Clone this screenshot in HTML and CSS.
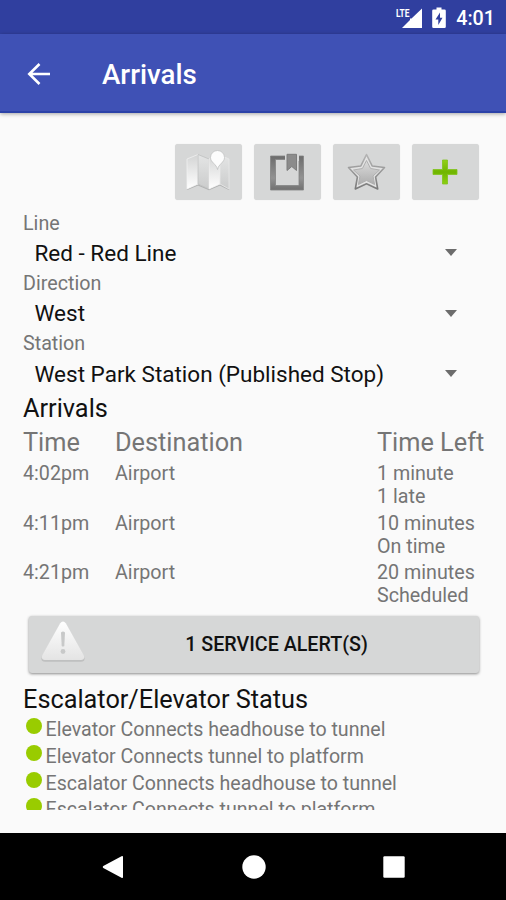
FILE: index.html
```html
<!DOCTYPE html>
<html lang="en">
<head>
<meta charset="utf-8">
<title>Arrivals</title>
<link rel="stylesheet" href="styles.css">
</head>
<body>
<div class="screen">
  <div class="status-bar">
    <svg class="signal" width="28" height="24" viewBox="0 0 28 24">
      <path d="M26 2.500V22H6L14 14V12.500H15.500Z" fill="#fff"/>
      <text class="lte" x="0" y="11" textLength="13.500" lengthAdjust="spacingAndGlyphs">LTE</text>
    </svg>
    <svg class="battery" width="14" height="22" viewBox="0 0 14 22">
      <path d="M4.500 0.500h5v2h3q1.300 0 1.300 1.300v16q0 1.300-1.300 1.300h-11q-1.300 0-1.300-1.300v-16q0-1.300 1.300-1.300h3z" fill="#fff"/>
      <path d="M8 5.500L3.500 12.500H6.300V18L10.500 10.800H8Z" fill="#303f9f"/>
    </svg>
    <span class="clock">4:01</span>
  </div>
  <header class="toolbar">
    <svg class="back" width="24" height="24" viewBox="0 0 24 24" fill="none" stroke="#fff" stroke-width="2.600">
      <path d="M24 12H3.500M13.500 2L3.300 12L13.500 22"/>
    </svg>
    <h1 class="title">Arrivals</h1>
  </header>
  <main class="content">
    <div class="actions">
      <button class="action" aria-label="Map">
        <svg width="46" height="44" viewBox="0 0 46 44">
          <defs>
            <linearGradient id="fold" x1="0" y1="0" x2="0" y2="1"><stop offset="0" stop-color="#d3d4d4"/><stop offset="1" stop-color="#fff"/></linearGradient>
            <linearGradient id="fold2" x1="0" y1="0" x2="0" y2="1"><stop offset="0" stop-color="#e4e5e5"/><stop offset="1" stop-color="#cbcccc"/></linearGradient>
          </defs>
          <path d="M2 39.500L13 35L24 39.500L35 35L44 39.500" fill="none" stroke="#b2b3b3" stroke-width="1.200"/>
          <path d="M2 9L13 4.500V34L2 39Z" fill="url(#fold)" stroke="#f4f4f4" stroke-width=".7"/>
          <path d="M13 4.500L24 9V39L13 34Z" fill="url(#fold2)" stroke="#bfc0c0" stroke-width=".8"/>
          <path d="M24 9L35 5V34L24 39Z" fill="url(#fold)" stroke="#f4f4f4" stroke-width=".7"/>
          <path d="M35 5L44 9V39L35 34Z" fill="url(#fold2)" stroke="#e8e8e8" stroke-width=".8"/>
          <path d="M32.500 19.500C31.500 14 25.500 12.500 25.500 7.500A7 7 0 0 1 39.500 7.500C39.500 12.500 33.500 14 32.500 19.500Z" fill="#fcfcfc" stroke="#c0c1c1" stroke-width=".8"/>
        </svg>
      </button>
      <button class="action" aria-label="Bookmarks">
        <svg width="36" height="38" viewBox="0 0 36 38">
          <defs><linearGradient id="frame" x1="0" y1="0" x2="0" y2="1"><stop offset="0" stop-color="#6c6c6c"/><stop offset=".65" stop-color="#929292"/><stop offset="1" stop-color="#707070"/></linearGradient></defs>
          <path d="M1.500 3H34.500V37H1.500ZM6.500 6.500V32.500H30V6.500Z" fill="url(#frame)" fill-rule="evenodd" stroke="#848484" stroke-width=".8"/>
          <path d="M16 2H30V8H16Z" fill="#d6d7d7"/>
          <path d="M18 1.300H27.500V17.500L22.800 13.500L18 17.500Z" fill="#8b8b8b" stroke="#7c7c7c"/>
        </svg>
      </button>
      <button class="action" aria-label="Favorite">
        <svg width="40" height="40" viewBox="0 0 40 40">
          <defs>
            <linearGradient id="star" x1="0" y1="0" x2="0" y2="1"><stop offset="0" stop-color="#dcdcdc"/><stop offset="1" stop-color="#adadad"/></linearGradient>
            <linearGradient id="edge" x1="0" y1="0" x2="0" y2="1"><stop offset="0" stop-color="#b4b4b4"/><stop offset="1" stop-color="#7a7a7a"/></linearGradient>
          </defs>
          <path d="M20.500 2.500L26.200 14L38.500 15.500L29.600 25L31.700 37L20.500 31.700L9.300 37L11.400 25L2.500 15.500L14.800 14Z" fill="#e2e2e2" stroke="url(#edge)" stroke-width="1.600" stroke-linejoin="round"/>
          <path d="M20.500 8.500L24.600 16.500L33.500 18L27 24L28.600 32.500L20.500 28.500L12.400 32.500L14 24L7.500 18L16.400 16.500Z" fill="url(#star)" stroke="#b0b0b0" stroke-width="1" stroke-linejoin="round"/>
        </svg>
      </button>
      <button class="action" aria-label="Add">
        <svg width="26" height="26" viewBox="0 0 26 26">
          <defs><linearGradient id="plus" x1="0" y1="0" x2="0" y2="1"><stop offset="0" stop-color="#93d016"/><stop offset=".5" stop-color="#70b500"/><stop offset="1" stop-color="#8bcf10"/></linearGradient></defs>
          <path d="M10.500 1H15.500V10.500H25V15.500H15.500V25H10.500V15.500H1V10.500H10.500Z" fill="url(#plus)" stroke="#80c31c" stroke-width=".8" stroke-linejoin="round"/>
        </svg>
      </button>
    </div>

    <div class="field"><div class="label">Line</div><div class="spinner"><span>Red - Red Line</span><i class="caret"></i></div></div>
    <div class="field"><div class="label">Direction</div><div class="spinner"><span>West</span><i class="caret"></i></div></div>
    <div class="field"><div class="label">Station</div><div class="spinner"><span>West Park Station (Published Stop)</span><i class="caret"></i></div></div>

    <h2 class="heading arrivals-heading">Arrivals</h2>
    <div class="row head"><span>Time</span><span>Destination</span><span>Time Left</span></div>
    <div class="row"><span>4:02pm</span><span>Airport</span><span>1 minute<br>1 late</span></div>
    <div class="row"><span>4:11pm</span><span>Airport</span><span>10 minutes<br>On time</span></div>
    <div class="row"><span>4:21pm</span><span>Airport</span><span>20 minutes<br>Scheduled</span></div>

    <button class="alert">
      <svg class="warning" width="46" height="42" viewBox="0 0 46 42">
        <defs><linearGradient id="warn" x1="0" y1="0" x2="0" y2="1"><stop offset="0" stop-color="#fff"/><stop offset="1" stop-color="#e4e4e4"/></linearGradient></defs>
        <path d="M20 3.500Q23 -1 26 3.500L44 35Q46 40.500 41 40.800H5Q0 40.500 2 35Z" fill="#bfc0c0"/>
        <path d="M20 2.500Q23 -1.500 26 2.500L43.700 34Q45.500 38.700 41 39H5Q0.500 38.700 2.300 34Z" fill="url(#warn)"/>
        <path d="M21 11.500Q23 9.500 25 11.500L24.300 25Q23 26 21.700 25Z" fill="#c8c9c9"/>
        <circle cx="23" cy="30.500" r="2.400" fill="#c8c9c9"/>
      </svg>
      <span class="alert-text">1 SERVICE ALERT(S)</span>
    </button>

    <h2 class="heading">Escalator/Elevator Status</h2>
    <ul class="list">
      <li><i class="dot"></i>Elevator Connects headhouse to tunnel</li>
      <li><i class="dot"></i>Elevator Connects tunnel to platform</li>
      <li><i class="dot"></i>Escalator Connects headhouse to tunnel</li>
      <li><i class="dot"></i>Escalator Connects tunnel to platform</li>
    </ul>
  </main>
  <nav class="nav-bar">
    <svg width="22" height="24" viewBox="0 0 22 24"><path d="M19.500 1.300Q21 .5 21 2V22Q21 23.500 19.500 22.700L1.300 13Q0 12 1.300 11Z" fill="#fff"/></svg>
    <svg width="24" height="24" viewBox="0 0 24 24"><circle cx="12" cy="12" r="11.700" fill="#fff"/></svg>
    <svg width="22" height="22" viewBox="0 0 22 22"><rect x=".3" y=".3" width="21.400" height="21.400" rx="1.200" fill="#fff"/></svg>
  </nav>
</div>
</body>
</html>
```
FILE: styles.css
```css
* { box-sizing: border-box; }
body { margin: 0; font-family: Roboto, "Liberation Sans", sans-serif; color: #757575; }
h1, h2, ul { margin: 0; padding: 0; font-weight: 400; }
button { border: 0; padding: 0; font: inherit; color: #111; background: #d6d7d7; }
svg { display: block; flex: none; }

.screen { width: 506px; height: 900px; display: flex; flex-direction: column; background: #fafafa; overflow: hidden; }

.status-bar { flex: none; height: 34px; padding-right: 11px; display: flex; align-items: center; justify-content: flex-end; background: #303f9f; color: #fff; }
.signal { margin-right: 8px; margin-top: 2px; }
.lte { font-size: 11px; font-weight: 700; fill: #fff; }
.battery { margin-right: 10px; margin-top: 1px; }
.clock { font-size: 19.7px; font-weight: 500; line-height: 34px; padding-top: 3px; }

.toolbar { flex: none; height: 79px; padding-left: 26px; display: flex; align-items: center; background: #3f51b5; border-bottom: 2px solid #2b42a8; box-shadow: 0 1px 4px rgba(0, 0, 0, .35); }
.back { margin-right: 52px; margin-top: 2px; }
.title { font-size: 27.7px; line-height: 34px; font-weight: 500; color: #fff; padding-top: 4px; }

.content { flex: none; height: 697px; padding: 31px 22px 0 23px; overflow: hidden; font-size: 19.7px; line-height: 23px; }
.actions { display: flex; justify-content: flex-end; gap: 11.500px; padding-right: 5px; margin-bottom: 11.500px; }
.action { width: 67.500px; height: 56px; border-radius: 3px; display: flex; align-items: center; justify-content: center; box-shadow: 0 0 1px rgba(0, 0, 0, .15); }

.field { height: 60.450px; }
.label { height: 23.500px; }
.spinner { height: 36.800px; padding: 0 27px 0 11.500px; display: flex; align-items: center; justify-content: space-between; font-size: 22.500px; color: #111; }
.caret { border: 6.500px solid transparent; border-top: 7px solid #6c6c6c; border-bottom: 0; margin-top: -1px; }

.heading { font-size: 25.300px; line-height: 30px; color: #111; }
.arrivals-heading { padding-top: 1.500px; }
.row { display: grid; grid-template-columns: 92px 262px 1fr; height: 49.700px; white-space: nowrap; }
.row.head { height: 37.700px; padding-top: 4px; font-size: 25.300px; line-height: 30px; }

.alert { width: 450px; height: 57px; margin: 5px 0 12px 5.500px; padding-left: 11px; display: flex; align-items: center; border-radius: 3px; box-shadow: 0 1px 3px rgba(0, 0, 0, .45); }
.warning { margin-top: -5px; }
.alert-text { flex: 1; padding-left: 43px; text-align: center; padding-right: 54px; font-weight: 500; white-space: nowrap; }

.list { list-style: none; font-size: 19.600px; }
.list li { display: flex; height: 26.800px; padding-left: 3px; line-height: 30px; white-space: nowrap; }
.dot { width: 16px; height: 16px; margin: 3px 3.500px 0 0; border-radius: 50%; background: #99cc00; flex: none; }

.nav-bar { flex: none; height: 67px; margin-top: auto; padding: 0 101px 0 102px; display: flex; align-items: center; justify-content: space-between; background: #000; }
```
